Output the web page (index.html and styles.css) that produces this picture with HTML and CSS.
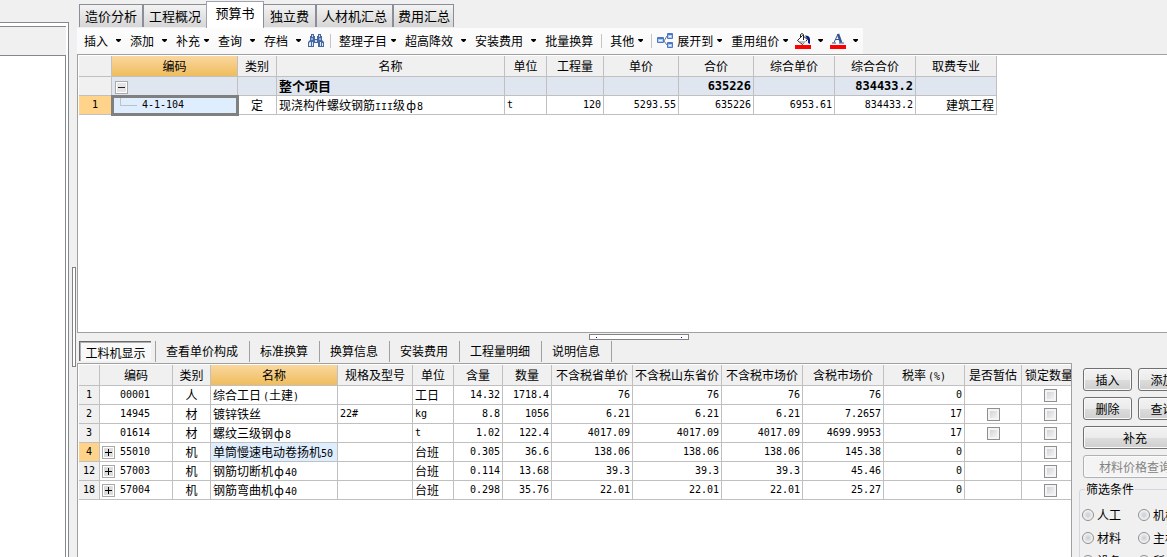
FILE: index.html
```html
<!DOCTYPE html>
<html lang="zh-CN">
<head>
<meta charset="utf-8">
<title>预算书</title>
<link rel="stylesheet" href="styles.css">
</head>
<body>
<div class="app">
  <aside class="tree">
    <div class="tree-frame">
      <div class="tree-head"></div>
      <div class="tree-body"></div>
    </div>
  </aside>
  <div class="vsplit"><div class="vgrip"></div></div>
  <main class="main">
    <nav class="tabs">
      <button class="tab">造价分析</button>
      <button class="tab">工程概况</button>
      <button class="tab active">预算书</button>
      <button class="tab">独立费</button>
      <button class="tab wide">人材机汇总</button>
      <button class="tab">费用汇总</button>
    </nav>
    <div class="toolbar">
      <button class="tool split">插入</button>
      <button class="tool split">添加</button>
      <button class="tool drop">补充</button>
      <button class="tool split">查询</button>
      <button class="tool split">存档</button>
      <button class="tool icon" aria-label="查找">
        <svg width="16" height="16" viewBox="0 0 16 16"><path d="M3 1h3v2h1v3h2V3h1V1h3v2h1v4l2 2v5h-6v-4H6v4H0V9l2-2V3h1z" fill="#46689f"/><path d="M4 2h1v2H4zM11 2h1v2h-1zM7 7h2v2H7z" fill="#c8daf2"/><path d="M3 5h2v2H3zM11 5h2v2h-2z" fill="#8fb0df"/><path d="M2 9h1v4H1v-3zM4 9h1v4H4zM12 9h1v4h-1v-3zM14 10h1v3h-1z" fill="#dbe8f8"/></svg>
      </button>
      <span class="bar"></span>
      <button class="tool drop">整理子目</button>
      <button class="tool split">超高降效</button>
      <button class="tool split">安装费用</button>
      <button class="tool">批量换算</button>
      <span class="bar"></span>
      <button class="tool drop">其他</button>
      <span class="bar near"></span>
      <button class="tool drop"><svg width="16" height="16" viewBox="0 0 16 16"><path d="M6 8h1l3-5M7 8l3 4" fill="none" stroke="#6c7684"/><path d="M.5 4.500h6v5h-6zM10.500.5h5v5h-5zM10.500 9.500h5v5h-5z" fill="#a9c8f4" stroke="#4a78c4"/><path d="M1 5.500h5M11 1.500h4M11 10.500h4" stroke="#4a78c4"/><path d="M2 7h3v1H2zM12 3h2v1h-2zM12 12h2v1h-2z" fill="#fff"/></svg>展开到</button>
      <button class="tool drop">重用组价</button>
      <button class="tool split color" aria-label="填充颜色"><svg width="16" height="16" viewBox="0 0 16 16"><path d="M2.500 7.500l5-5 5 4-5 5z" fill="#fff" stroke="#222"/><path d="M4 8h8l-4 3z" fill="#b9bec8"/><path d="M5.500 5V1.500q1.500-2 3 0V7" fill="none" stroke="#222"/><path d="M10 2.500q5 0 5 4V11l-2-1V7z" fill="#0a1c80"/><path d="M0 12h16v4H0z" fill="#f00"/></svg></button>
      <button class="tool split color" aria-label="文字颜色"><svg width="16" height="16" viewBox="0 0 16 16"><path d="M4 9.500L8 1l3.500 8.500M5.500 6.500h5" fill="none" stroke="#35558f"/><path d="M8 1l3 8.500" stroke="#35558f" stroke-width="2.500"/><path d="M2 10h4M9 10h5" stroke="#35558f"/><path d="M0 12h16v4H0z" fill="#f00"/></svg></button>
    </div>
    <section class="budget">
      <table class="grid">
        <colgroup><col class="w33"><col class="w126"><col class="w39"><col class="w228"><col class="w42"><col class="w57"><col class="w75"><col class="w75"><col class="w81"><col class="w81"><col class="w81"></colgroup>
        <thead><tr><th></th><th class="hot">编码</th><th>类别</th><th>名称</th><th>单位</th><th>工程量</th><th>单价</th><th>合价</th><th>综合单价</th><th>综合合价</th><th>取费专业</th></tr></thead>
        <tbody>
          <tr class="total"><td class="idx"></td><td class="root"><button class="box minus" aria-label="折叠"></button></td><td></td><td class="name">整个项目</td><td></td><td></td><td></td><td class="num">635226</td><td></td><td class="num">834433.2</td><td></td></tr>
          <tr><td class="idx hot-idx">1</td><td class="focus"><div class="leaf"><span class="branch"></span>4-1-104</div></td><td class="mid">定</td><td>现浇构件螺纹钢筋<span class="roman">III</span>级<span class="phi">ф</span><span class="mono">8</span></td><td class="mono">t</td><td class="num">120</td><td class="num">5293.55</td><td class="num">635226</td><td class="num">6953.61</td><td class="num">834433.2</td><td class="right">建筑工程</td></tr>
        </tbody>
      </table>
    </section>
    <div class="hsplit"><div class="hgrip"></div></div>
    <nav class="subtabs">
      <button class="subtab on">工料机显示</button>
      <button class="subtab">查看单价构成</button>
      <button class="subtab">标准换算</button>
      <button class="subtab">换算信息</button>
      <button class="subtab">安装费用</button>
      <button class="subtab">工程量明细</button>
      <button class="subtab">说明信息</button>
    </nav>
    <div class="lower">
      <section class="detail">
        <table class="grid">
          <colgroup><col class="w21"><col class="w73"><col class="w38"><col class="w127"><col class="w75"><col class="w41"><col class="w49"><col class="w49"><col class="w81"><col class="w89"><col class="w81"><col class="w81"><col class="w81"><col class="w57"><col class="w57"></colgroup>
          <thead><tr><th></th><th>编码</th><th>类别</th><th class="hot">名称</th><th>规格及型号</th><th>单位</th><th>含量</th><th>数量</th><th>不含税省单价</th><th>不含税山东省价</th><th>不含税市场价</th><th>含税市场价</th><th>税率<span class="mono paren">(%)</span></th><th>是否暂估</th><th class="cut">锁定数量</th></tr></thead>
          <tbody>
            <tr><td class="idx">1</td><td class="code">00001</td><td class="mid">人</td><td>综合工日<span class="mono paren">(</span>土建<span class="mono">)</span></td><td></td><td>工日</td><td class="num">14.32</td><td class="num">1718.4</td><td class="num">76</td><td class="num">76</td><td class="num">76</td><td class="num">76</td><td class="num">0</td><td></td><td class="mid"><input type="checkbox" class="check" aria-label="锁定数量"></td></tr>
            <tr><td class="idx">2</td><td class="code">14945</td><td class="mid">材</td><td>镀锌铁丝</td><td class="mono">22#</td><td class="mono">kg</td><td class="num">8.8</td><td class="num">1056</td><td class="num">6.21</td><td class="num">6.21</td><td class="num">6.21</td><td class="num">7.2657</td><td class="num">17</td><td class="mid"><input type="checkbox" class="check" aria-label="是否暂估"></td><td class="mid"><input type="checkbox" class="check" aria-label="锁定数量"></td></tr>
            <tr><td class="idx">3</td><td class="code">01614</td><td class="mid">材</td><td>螺纹三级钢<span class="phi">ф</span><span class="mono">8</span></td><td></td><td class="mono">t</td><td class="num">1.02</td><td class="num">122.4</td><td class="num">4017.09</td><td class="num">4017.09</td><td class="num">4017.09</td><td class="num">4699.9953</td><td class="num">17</td><td class="mid"><input type="checkbox" class="check" aria-label="是否暂估"></td><td class="mid"><input type="checkbox" class="check" aria-label="锁定数量"></td></tr>
            <tr><td class="idx hot-idx">4</td><td class="node"><button class="box plus" aria-label="展开"></button>55010</td><td class="mid">机</td><td class="picked">单筒慢速电动卷扬机<span class="mono">50</span></td><td></td><td>台班</td><td class="num">0.305</td><td class="num">36.6</td><td class="num">138.06</td><td class="num">138.06</td><td class="num">138.06</td><td class="num">145.38</td><td class="num">0</td><td></td><td class="mid"><input type="checkbox" class="check" aria-label="锁定数量"></td></tr>
            <tr><td class="idx">12</td><td class="node"><button class="box plus" aria-label="展开"></button>57003</td><td class="mid">机</td><td>钢筋切断机<span class="phi">ф</span><span class="mono">40</span></td><td></td><td>台班</td><td class="num">0.114</td><td class="num">13.68</td><td class="num">39.3</td><td class="num">39.3</td><td class="num">39.3</td><td class="num">45.46</td><td class="num">0</td><td></td><td class="mid"><input type="checkbox" class="check" aria-label="锁定数量"></td></tr>
            <tr><td class="idx">18</td><td class="node"><button class="box plus" aria-label="展开"></button>57004</td><td class="mid">机</td><td>钢筋弯曲机<span class="phi">ф</span><span class="mono">40</span></td><td></td><td>台班</td><td class="num">0.298</td><td class="num">35.76</td><td class="num">22.01</td><td class="num">22.01</td><td class="num">22.01</td><td class="num">25.27</td><td class="num">0</td><td></td><td class="mid"><input type="checkbox" class="check" aria-label="锁定数量"></td></tr>
          </tbody>
        </table>
      </section>
      <aside class="side">
        <div class="actions">
          <button class="btn">插入</button><button class="btn">添加</button>
          <button class="btn">删除</button><button class="btn">查询</button>
          <button class="btn full">补充</button>
          <button class="btn full" disabled>材料价格查询</button>
        </div>
        <fieldset class="filter">
          <legend>筛选条件</legend>
          <label><input type="radio" name="kind">人工</label><label><input type="radio" name="kind">机械</label>
          <label><input type="radio" name="kind">材料</label><label><input type="radio" name="kind">主材</label>
          <label><input type="radio" name="kind">设备</label><label><input type="radio" name="kind" checked>所有</label>
        </fieldset>
      </aside>
    </div>
  </main>
</div>
</body>
</html>
```
FILE: styles.css
```css
*, *::before, *::after { box-sizing: border-box; }
body {
  margin: 0;
  background: #f0f0f0;
  color: #000;
  font: 12px/16px "Noto Sans CJK SC", sans-serif;
}
button { font: inherit; color: inherit; margin: 0; padding: 0; border: 0; background: none; white-space: nowrap; }
.app { display: flex; height: 100vh; overflow: hidden; }

.tree { flex: 0 0 69px; padding-top: 22px; display: flex; }
.tree-frame { flex: 1; display: flex; flex-direction: column; background: #fff; border: solid #828790; border-width: 1px 1px 0 0; padding: 3px 2px 0 0; }
.tree-head { height: 29px; background: #f0f0f0; border-top: 1px solid #828790; }
.tree-body { flex: 1; background: #fff; border: solid #828790; border-width: 1px 1px 0 0; }
.vsplit { flex: 0 0 8px; padding: 267px 1px 0 3px; }
.vgrip { width: 4px; height: 100px; border: 1px solid #828282; background: #fff; }

.main { flex: 1; min-width: 0; display: flex; flex-direction: column; }
.tabs { display: flex; align-items: flex-end; height: 28px; padding: 0 0 1px 2px; flex: none; }
.tab { height: 23px; padding: 0 5px; font-size: 13px; background: linear-gradient(#f3f3f3, #d6d6d6); border: solid #8b8e98; border-width: 1px 1px 0 1px; width: 64px; }
.tab.active { height: 27px; width: 58px; margin: 0 -1px -1px; padding-bottom: 4px; background: #fff; border-color: #a0a3ad; }
.tab:nth-child(4) { width: 53px; }
.tab.wide { width: 77px; }
.tab:last-child { width: 61px; padding: 0 4px; }

.toolbar { display: flex; align-items: center; align-self: flex-start; gap: 9px; height: 26px; padding: 0 5px 1px 7px; background: linear-gradient(#fcfcfd, #f8f8f8); flex: none; }
.tool { display: flex; align-items: center; height: 20px; gap: 4px; }
.split { gap: 8px; }
.split::after, .drop::after { content: ""; width: 5px; height: 3px; background: #000; clip-path: polygon(0 0, 100% 0, 100% 33%, 60% 100%, 40% 100%, 0 33%); }
.icon { margin: 0 -2px; }
.color { gap: 7px; margin-left: -2px; }
.bar { width: 1px; height: 14px; background: #c5c5c5; margin: 0 -1px; }
.bar.near { margin-right: -4px; }

.budget { flex: 277 1 0; min-height: 120px; background: #fff; border: solid #a0a0a0; border-width: 1px 0 1px 1px; padding: 1px 0 0 1px; overflow: hidden; }
.grid { border-collapse: separate; border-spacing: 0; table-layout: fixed; width: 1px; }
.w21 { width: 21px; } .w33 { width: 33px; } .w38 { width: 38px; } .w39 { width: 39px; }
.w41 { width: 41px; } .w42 { width: 42px; } .w49 { width: 49px; } .w57 { width: 57px; }
.w73 { width: 73px; } .w75 { width: 75px; } .w81 { width: 81px; } .w89 { width: 89px; }
.w126 { width: 126px; } .w127 { width: 127px; } .w228 { width: 228px; }
.grid th, .grid td { padding: 0 2px; border: solid #c0c0c0; border-width: 0 1px 1px 0; white-space: nowrap; overflow: hidden; }
.grid th { height: 21px; line-height: 18px; padding: 0; font-weight: 400; background: #f0f0f0; text-align: center; }
.grid td { height: 19px; line-height: 16px; text-align: left; }
.grid .hot { background: linear-gradient(#fad79f, #efbd5d); }
.grid .cut { text-align: left; padding-left: 3px; }
.mono, .grid .mono, .grid .num, .grid .idx, .grid .code, .grid .node, .grid .focus { font-family: "DejaVu Sans Mono", monospace; font-size: 10px; }
span.mono, .roman, .phi { line-height: 1; }
.paren { margin-left: 2px; }
.roman { font-family: "Liberation Mono", monospace; font-size: 10px; }
.phi { display: inline-block; width: 12px; text-align: center; }
.grid .num { text-align: right; }
.grid .right { text-align: right; }
.grid .mid { text-align: center; }
.grid .idx { background: #f0f0f0; text-align: center; padding: 0; }
.grid .hot-idx { background: #ffd48a; }
.grid .code { padding-left: 20px; }
.grid .node { padding-left: 2px; line-height: 14px; }
.node .box { margin-right: 5px; }
.grid .total td { background: #dfe6ef; font-weight: 700; }
.grid .total .idx { background: #f0f0f0; }
.total .name { font-size: 13px; }
.grid .total .num { font-size: 12px; }
.grid .root { padding-left: 3px; line-height: 14px; }
.grid .focus { outline: 3px solid #808080; outline-offset: -2px; background: #dfeeff; padding: 0; }
.grid .picked { background: #dfeeff; }
.leaf { display: flex; align-items: center; gap: 5px; padding-left: 8px; height: 18px; }
.branch { width: 17px; height: 9px; margin-bottom: 7px; border: solid #c0c0c0; border-width: 0 0 1px 1px; }
.box { display: inline-block; width: 13px; height: 13px; border: 1px solid #a8a8a8; vertical-align: middle; box-shadow: inset 0 0 0 1px #fff; }
.minus { background: linear-gradient(#222, #222) center / 7px 1px no-repeat, #e4e4e6; }
.plus { background: linear-gradient(#000, #000) center / 7px 1px no-repeat, linear-gradient(#000, #000) center / 1px 7px no-repeat, #dcdcde; }
.check { appearance: none; display: block; width: 13px; height: 13px; margin: 0 auto; border: 1px solid #8e8f8f; background: linear-gradient(135deg, #c9ccd2, #fafafa); box-shadow: inset 0 0 0 2px #f4f4f4; }

.hsplit { height: 7px; flex: none; padding-top: 1px; }
.hgrip { width: 100px; height: 6px; margin-left: 47%; border: 1px solid #828282; background: linear-gradient(#00a, #00a) 6px 2px / 1px 1px no-repeat, linear-gradient(#00a, #00a) 91px 2px / 1px 1px no-repeat, #fff; }
.subtabs { display: flex; height: 23px; padding: 1px 0 1px 2px; flex: none; }
.subtab { padding: 0 11px 2px 10px; border-right: 1px solid #a0a0a0; }
.subtab.on { padding: 2px 5px 0 5px; height: 20px; width: 72px; margin-right: 4px; border: solid #696969; border-width: 1px 0 0 1px; background: #f8f8f8; box-shadow: inset 1px 1px #b0b0b0; }
.subtab.on + .subtab { border-left: 1px solid #a0a0a0; }
.lower { flex: 194 1 0; display: flex; min-height: 0; }
.detail { flex: 1; min-width: 0; background: #fff; border: solid #a0a0a0; border-width: 1px 1px 0 1px; padding: 1px 1px 0 1px; overflow: hidden; }
.side { flex: 0 0 95px; overflow: hidden; padding: 5px 0 0 7px; }
.actions { display: grid; grid-template-columns: 49px 49px; gap: 6px; width: 104px; margin-left: 4px; }
.btn { height: 23px; border: 1px solid #707070; border-radius: 3px; background: linear-gradient(#f3f3f3 0%, #ebebeb 50%, #dddddd 51%, #cfcfcf 100%); box-shadow: inset 0 0 0 1px #fafafa; }
.full { grid-column: 1 / 3; }
.btn:disabled { color: #838383; border-color: #adb2b5; background: #f4f4f4; }
.filter { display: grid; grid-template-columns: 56px 56px; gap: 7px 0; width: 116px; height: 110px; align-content: start; margin: 3px 0 0; padding: 10px 2px 0; border: 1px solid #d0d7e0; border-radius: 3px; }
.filter legend { padding: 0 1px; margin-left: 3px; }
.filter label { display: flex; align-items: center; gap: 3px; height: 16px; white-space: nowrap; }
.filter input { appearance: none; flex: none; width: 12px; height: 12px; margin: 0; border: 1px solid #8e8f8f; border-radius: 50%; background: radial-gradient(#c9ccd2, #f4f4f4 75%); box-shadow: inset 0 0 0 1px #f4f4f4; }
.filter input:checked { background: radial-gradient(#1b6fae 35%, #e8f2f8 45%); }
```
